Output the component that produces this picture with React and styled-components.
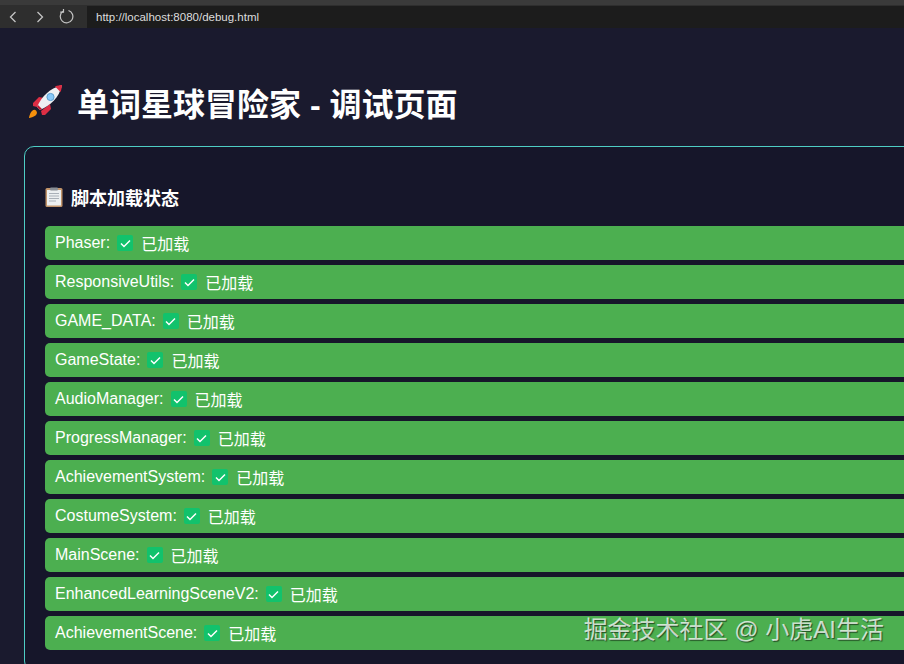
import React from "react";
import styled, { createGlobalStyle } from "styled-components";

const scripts = [
  "Phaser",
  "ResponsiveUtils",
  "GAME_DATA",
  "GameState",
  "AudioManager",
  "ProgressManager",
  "AchievementSystem",
  "CostumeSystem",
  "MainScene",
  "EnhancedLearningSceneV2",
  "AchievementScene",
];

const RocketIcon = () => (
  <svg width="36" height="36" viewBox="0 0 36 36">
    <path d="M4 27c-2 2-3 6-3 7 1 0 5-1 7-3 1.500-1.500 1-3.500 0-4.500s-2.500-1-4 .5z" fill="#f4900c" />
    <path d="M5 19l6-6 5 1-7 9-4-1zM17 31l6-6-1-5-9 7 1 4z" fill="#dd2e44" />
    <path d="M9 23c5-11 12-18 25-22-3 13-11 20-22 25z" fill="#eef0f2" />
    <path d="M27 2.500c2.500-1 5-1.500 7-1.500 0 2-.6 4.500-1.500 7z" fill="#dd2e44" />
    <path d="M9 23l3 3 2-1-4-4z" fill="#be1931" />
    <circle cx="22.500" cy="13" r="3.600" fill="#88c9f9" stroke="#5c9fd0" strokeWidth="1" />
  </svg>
);

const ClipboardIcon = () => (
  <svg width="18" height="20" viewBox="0 0 18 20">
    <rect x="0.500" y="1" width="17" height="19" rx="1.500" fill="#c1946a" />
    <rect x="2" y="3" width="14" height="15.500" fill="#eceff1" />
    <rect x="5" y="0.500" width="8" height="3" rx="1" fill="#8a8f96" />
    <path d="M4 6.500h10M4 9h10M4 11.500h10M4 14h7" stroke="#a9b0b8" strokeWidth="1" />
  </svg>
);

const CheckBadge = () => (
  <Badge>
    <svg width="11" height="9" viewBox="0 0 11 9" fill="none">
      <path d="M1 4.500 4 7.500 10 1.500" stroke="#fff" strokeWidth="1.500" />
    </svg>
  </Badge>
);

export default function App() {
  return (
    <>
      <GlobalStyle />
      <Toolbar>
        <NavButton aria-label="back">
          <svg width="8" height="12" viewBox="0 0 8 12" fill="none">
            <path d="M6.500 1 1.500 6l5 5" stroke="#c4c4c4" strokeWidth="1.300" />
          </svg>
        </NavButton>
        <NavButton aria-label="forward">
          <svg width="8" height="12" viewBox="0 0 8 12" fill="none">
            <path d="M1.500 1l5 5-5 5" stroke="#c4c4c4" strokeWidth="1.300" />
          </svg>
        </NavButton>
        <NavButton aria-label="reload">
          <svg width="15" height="15" viewBox="0 0 15 15" fill="none">
            <path d="M4 2.300A6.300 6.300 0 1 0 9.500 1.500" stroke="#c4c4c4" strokeWidth="1.200" />
            <path d="M4.500 0v3.200H1.200" stroke="#c4c4c4" strokeWidth="1.200" />
          </svg>
        </NavButton>
        <AddressBar>http://localhost:8080/debug.html</AddressBar>
      </Toolbar>
      <Page>
        <Title>
          <RocketIcon />
          <span>单词星球冒险家 - 调试页面</span>
        </Title>
        <Card>
          <SectionTitle>
            <ClipboardIcon />
            <span>脚本加载状态</span>
          </SectionTitle>
          <StatusList>
            {scripts.map((name) => (
              <StatusRow key={name}>
                {name}:
                <CheckBadge />
                <span>已加载</span>
              </StatusRow>
            ))}
          </StatusList>
        </Card>
      </Page>
      <Watermark>掘金技术社区 @ 小虎AI生活</Watermark>
    </>
  );
}

const GlobalStyle = createGlobalStyle`
  html, body {
    margin: 0;
    height: 100%;
    overflow: hidden;
    background: #1a1a2e;
  }
  body {
    font-family: "Liberation Sans", "Noto Sans CJK SC", sans-serif;
    color: #fff;
  }
  #root {
    position: relative;
    height: 100%;
    overflow: hidden;
  }
`;

const Toolbar = styled.div`
  height: 23px;
  padding-top: 5px;
  display: flex;
  align-items: center;
  background: linear-gradient(#3a3a3a 0 5px, #2e2e2e 5px);
`;

const NavButton = styled.div`
  width: 27px;
  display: flex;
  justify-content: center;
  align-items: center;
  &:first-child {
    margin-left: -1px;
  }
`;

const AddressBar = styled.div`
  flex: 1;
  height: 22px;
  margin-left: 7px;
  padding-left: 9px;
  display: flex;
  align-items: center;
  background: #1c1c1c;
  color: #dcdcdc;
  font-size: 11.500px;
`;

const Page = styled.div`
  padding: 52px 0 0 24px;
`;

const Title = styled.h1`
  margin: 0 0 22px;
  padding-left: 4px;
  height: 44px;
  display: flex;
  align-items: center;
  gap: 13px;
  font-size: 32px;
  font-weight: 700;
  white-space: nowrap;
`;

const Card = styled.section`
  width: 1000px;
  padding: 38px 20px 20px;
  box-sizing: border-box;
  border: 1px solid #4ecdc4;
  border-radius: 10px;
  background: #16162a;
`;

const SectionTitle = styled.h3`
  margin: 0 0 18px;
  height: 23px;
  display: flex;
  align-items: center;
  gap: 8px;
  font-size: 18px;
  font-weight: 700;
`;

const StatusList = styled.div`
  display: flex;
  flex-direction: column;
  gap: 5px;
`;

const StatusRow = styled.div`
  height: 34px;
  padding-left: 10px;
  display: flex;
  align-items: center;
  border-radius: 5px;
  background: #4caf50;
  font-size: 16px;
  white-space: pre;
`;

const Badge = styled.span`
  width: 16px;
  height: 16px;
  margin: 0 8px 0 7px;
  display: inline-flex;
  align-items: center;
  justify-content: center;
  border-radius: 2px;
  background: #12c26c;
`;

const Watermark = styled.div`
  position: absolute;
  right: 20px;
  bottom: 19px;
  font-size: 24px;
  line-height: 30px;
  color: rgba(255, 255, 255, 0.75);
  text-shadow: 1px 1px 1px rgba(0, 0, 0, 0.55);
  white-space: nowrap;
`;
